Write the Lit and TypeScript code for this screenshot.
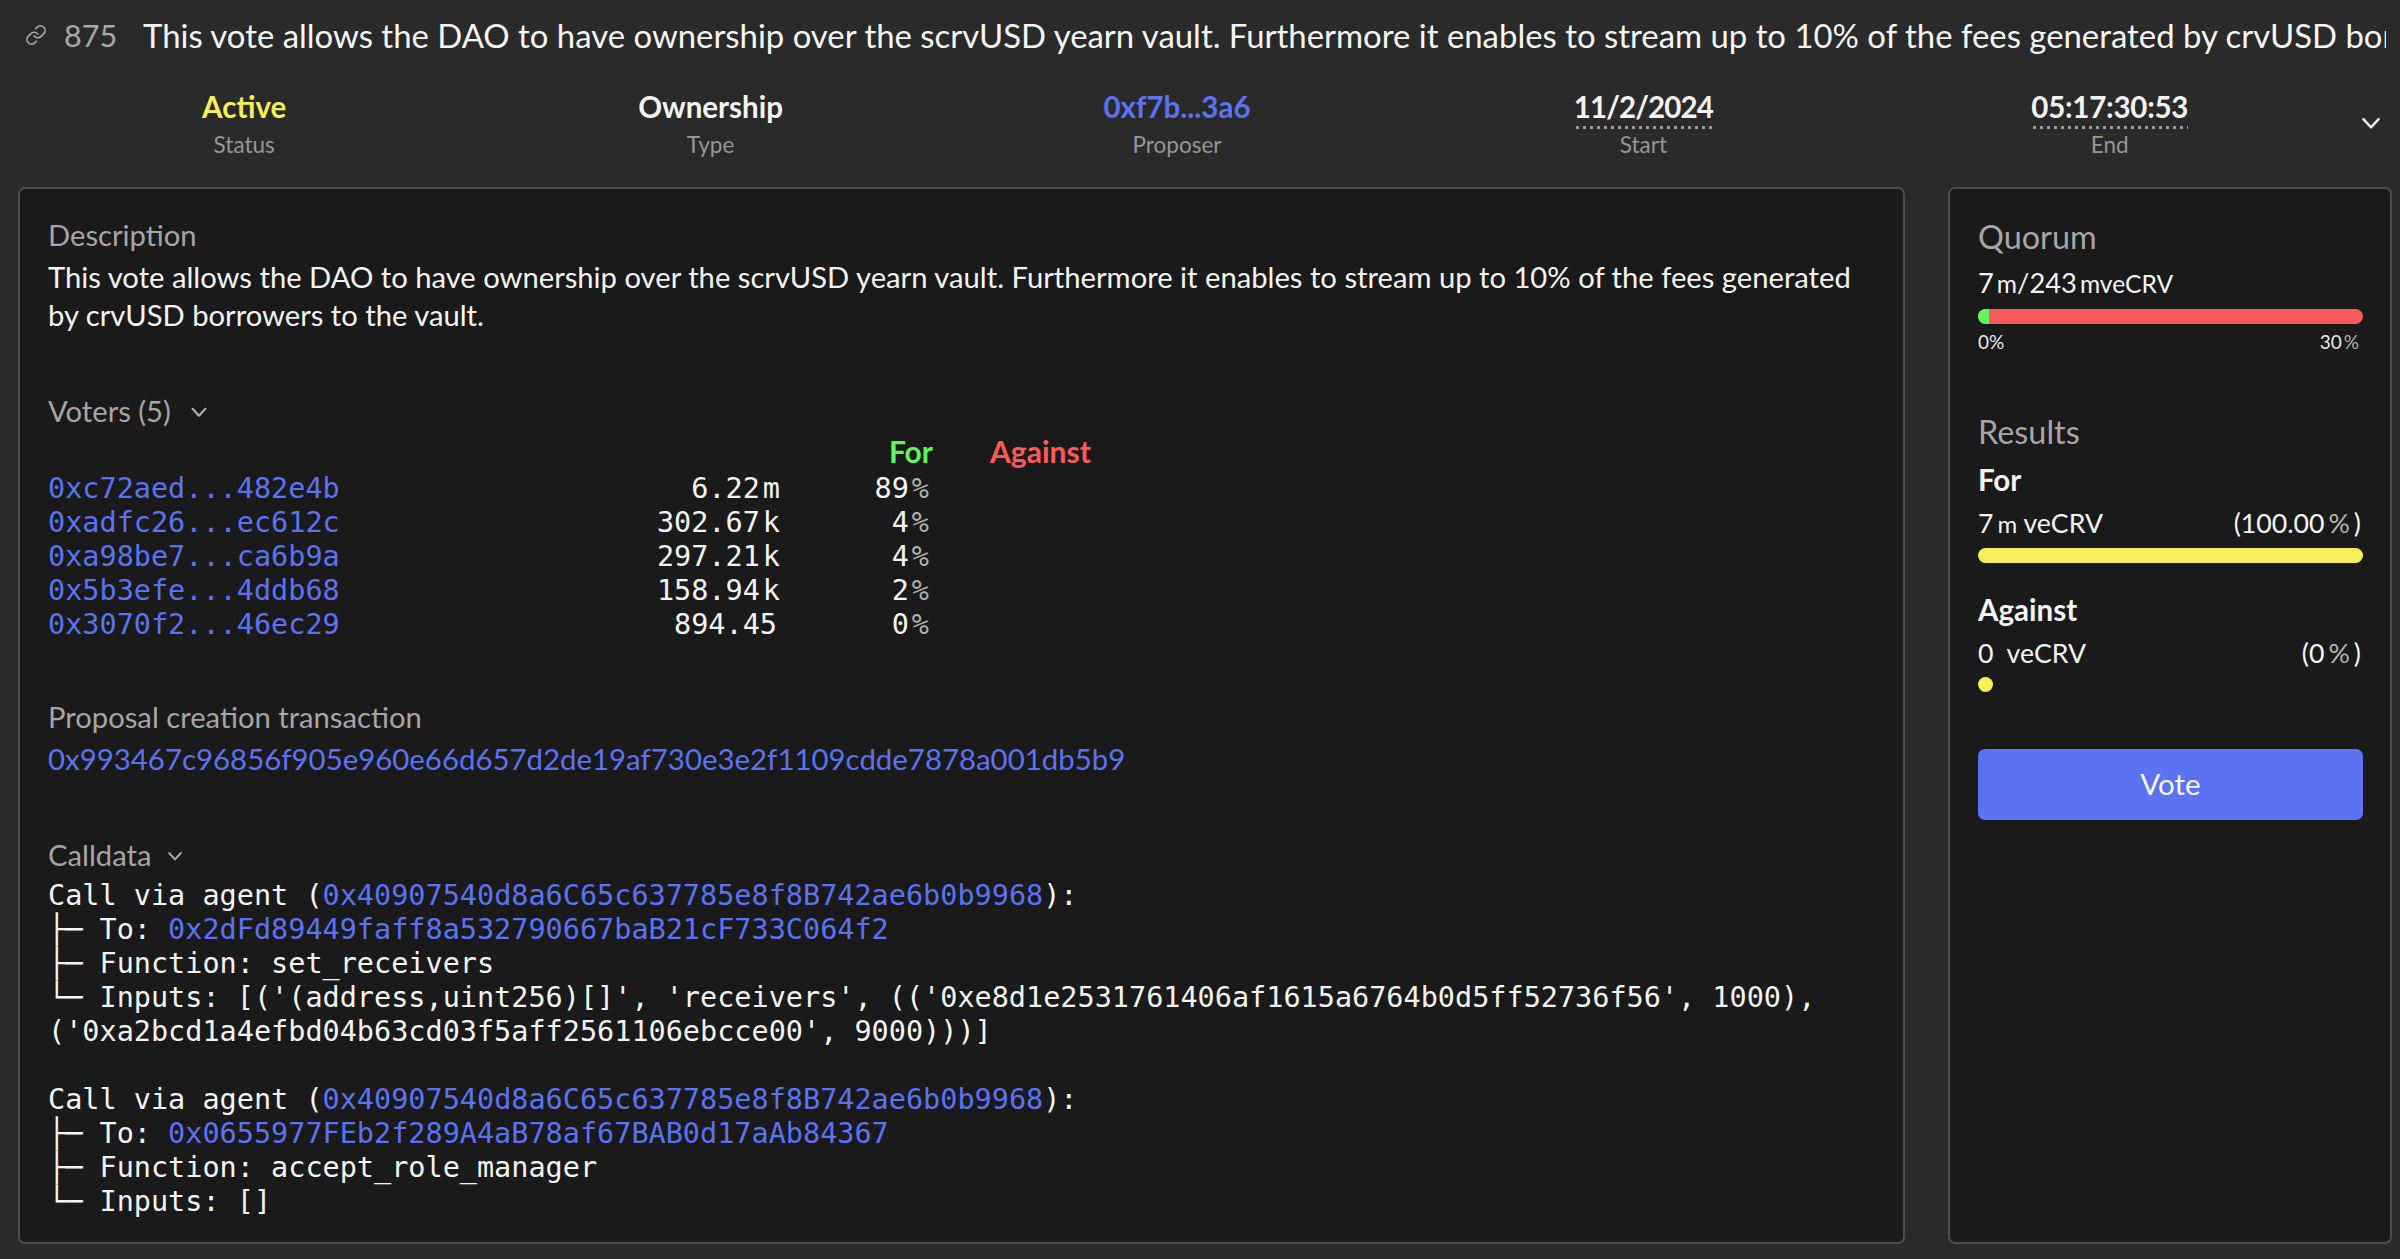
import { LitElement, html, css } from "lit";
import { customElement } from "lit/decorators.js";

const chevron = (w: number, sw = 2.4) => html`<svg class="chev" width="${w}" height="${w}" viewBox="0 0 24 24" fill="none" stroke="currentColor" stroke-width="${sw}" stroke-linecap="round" stroke-linejoin="round"><path d="M5 8.5 12 16l7-7.5"/></svg>`;

const voters = [
  ["0xc72aed...482e4b", "6.22", "m", "89"],
  ["0xadfc26...ec612c", "302.67", "k", "4"],
  ["0xa98be7...ca6b9a", "297.21", "k", "4"],
  ["0x5b3efe...4ddb68", "158.94", "k", "2"],
  ["0x3070f2...46ec29", "894.45", "", "0"],
];

@customElement("app-root")
export class AppRoot extends LitElement {
  static styles = css`
    :host { display: flex; flex-direction: column; height: 1259px; overflow: hidden; background: #2a2a2a; color: #f4f4f4; font-family: Lato, "Noto Sans", sans-serif; font-size: 29.2px; }
    .title-row { height: 72px; display: flex; align-items: center; padding: 0 14px 2px 25px; flex: none; box-sizing: border-box; }
    .link { width: 22px; height: 22px; color: #a8a8a8; flex: none; }
    .num { color: #a8a8a8; font-size: 30.5px; margin-left: 17px; flex: none; }
    .title { margin-left: 26px; font-size: 32.9px; white-space: nowrap; overflow: hidden; color: #f6f6f6; }
    .stats { display: grid; grid-template-columns: repeat(5, 466.4px); padding: 18px 0 0 11px; height: 115px; flex: none; position: relative; box-sizing: border-box; }
    .stat { display: flex; flex-direction: column; align-items: center; }
    .val { font-size: 29.5px; font-weight: 700; line-height: 34px; }
    .val.yellow { color: #f7ef5a; }
    .val.blue { color: #5b73f3; }
    .val.dot { padding-bottom: 5px; background: radial-gradient(circle, #9c9c9c 1.4px, transparent 1.7px) left bottom / 7px 3px repeat-x; }
    .val.date { letter-spacing: -0.9px; }
    .val.time { letter-spacing: -0.25px; }
    .lab { font-size: 22.5px; color: #969696; line-height: 28px; margin-top: 7px; }
    .lab.d { margin-top: 2px; }
    .stats .chev { position: absolute; right: 16px; top: 38px; color: #e8e8e8; }
    .main { flex: 1; display: flex; gap: 43px; padding: 0 8px 15px 18px; min-height: 0; }
    .panel { background: #1a1a1a; border: 2px solid #4d4d4d; border-radius: 7px; box-sizing: border-box; }
    .left { width: 1887px; padding: 27px 28px 0; flex: none; }
    .right { width: 444px; padding: 28px 28px 0; flex: none; display: flex; flex-direction: column; }
    .h { color: #a8a4a8; line-height: 38.5px; display: flex; align-items: center; }
    .h .chev { color: #b0b0b0; margin-top: 2px; }
    .voters .chev { margin-left: 17px; }
    .call .chev { margin-left: 14px; }
    .desc { line-height: 38.5px; margin-top: 3px; color: #f4f4f4; }
    .voters { margin-top: 57px; }
    .mono { font-family: "DejaVu Sans Mono", "Liberation Mono", monospace; font-size: 28.5px; line-height: 34px; }
    .vhead { display: flex; font-weight: 700; height: 34px; line-height: 34px; margin-top: 4px; margin-bottom: 4px; font-size: 30px; }
    .for { color: #5ff55f; width: 885px; text-align: right; }
    .against { color: #fa5a5a; margin-left: 57px; }
    .vrow { display: grid; grid-template-columns: 292px 440px 149px; height: 34px; }
    .amt { text-align: right; }
    .amt .sfx { margin-left: 3px; line-height: 0; }
    .amt.plain { padding-right: 3px; }
    .pct { text-align: right; }
    .pct span { color: #b0b0b0; font-size: 28.5px; margin-left: 3px; line-height: 0; }
    a { color: #5b73f3; text-decoration: none; }
    .prop { margin-top: 56px; }
    .tx { line-height: 38.5px; margin-top: 3px; font-size: 29.4px; }
    .call { margin-top: 58px; }
    pre { margin: 4px 0 0; white-space: pre-wrap; word-break: normal; color: #f4f4f4; }
    .q { font-size: 32.4px; color: #a8a4a8; line-height: 40px; }
    .q.r { margin-top: 58px; }
    .qv { line-height: 36px; margin-top: 8px; white-space: pre; font-size: 27.3px; }
    .u { font-size: 0.9em; margin-left: 3px; }
    .qbar { height: 15px; margin-top: 7px; border-radius: 8px; background: #fa5a5a; overflow: hidden; width: 385px; }
    .qbar div { width: 11px; height: 100%; background: #5ff55f; }
    .scale { display: flex; justify-content: space-between; font-size: 19px; line-height: 24px; margin-top: 6px; color: #e8e8e8; padding-right: 3px; }
    .scale span span { margin-left: 2px; color: #b0b0b0; }
    .side-b { font-weight: 700; line-height: 36px; margin-top: 10px; font-size: 29.5px; }
    .side-b.a { margin-top: 29px; }
    .row { display: flex; justify-content: space-between; line-height: 36px; margin-top: 7px; white-space: pre; font-size: 26.7px; padding-right: 1px; }
    .row .u { margin-left: 4px; }
    .row i { font-style: normal; color: #b4b4b4; margin: 0 4px; }
    .ybar { height: 15px; margin-top: 6px; border-radius: 8px; background: #f7ef5a; width: 385px; }
    .ybar.s { width: 15px; }
    button { all: unset; box-sizing: border-box; display: flex; justify-content: center; align-items: center; width: 385px; height: 71px; margin-top: 57px; padding-bottom: 2px; background: #5b73f3; border-radius: 7px; color: #f6f6f6; font-size: 29.5px; }
  `;

  render() {
    const addr = "0x40907540d8a6C65c637785e8f8B742ae6b0b9968";
    return html`
      <div class="title-row">
        <svg class="link" viewBox="0 0 24 24" fill="none" stroke="currentColor" stroke-width="1.8" stroke-linecap="round" stroke-linejoin="round"><path d="M10 13a5 5 0 0 0 7.54.54l3-3a5 5 0 0 0-7.07-7.07l-1.72 1.71"/><path d="M14 11a5 5 0 0 0-7.54-.54l-3 3a5 5 0 0 0 7.07 7.07l1.71-1.71"/></svg>
        <span class="num">875</span>
        <span class="title">This vote allows the DAO to have ownership over the scrvUSD yearn vault. Furthermore it enables to stream up to 10% of the fees generated by crvUSD borrowers to the vault.</span>
      </div>
      <div class="stats">
        <div class="stat"><div class="val yellow">Active</div><div class="lab">Status</div></div>
        <div class="stat"><div class="val">Ownership</div><div class="lab">Type</div></div>
        <div class="stat"><div class="val blue">0xf7b...3a6</div><div class="lab">Proposer</div></div>
        <div class="stat"><div class="val dot date">11/2/2024</div><div class="lab d">Start</div></div>
        <div class="stat"><div class="val dot time">05:17:30:53</div><div class="lab d">End</div></div>
        ${chevron(26)}
      </div>
      <div class="main">
        <div class="panel left">
          <div class="h">Description</div>
          <div class="desc">This vote allows the DAO to have ownership over the scrvUSD yearn vault. Furthermore it enables to stream up to 10% of the fees generated by crvUSD borrowers to the vault.</div>
          <div class="h voters">Voters (5) ${chevron(22)}</div>
          <div class="vhead"><span class="for">For</span><span class="against">Against</span></div>
          <div class="mono">
            ${voters.map(v => html`<div class="vrow"><a>${v[0]}</a><div class="amt ${v[2] ? "" : "plain"}">${v[1]}${v[2] ? html`<span class="sfx">${v[2]}</span>` : ""}</div><div class="pct">${v[3]}<span>%</span></div></div>`)}
          </div>
          <div class="h prop">Proposal creation transaction</div>
          <div class="tx"><a>0x993467c96856f905e960e66d657d2de19af730e3e2f1109cdde7878a001db5b9</a></div>
          <div class="h call">Calldata ${chevron(20)}</div>
          <pre class="mono">Call via agent (<a>${addr}</a>):
├─ To: <a>0x2dFd89449faff8a532790667baB21cF733C064f2</a>
├─ Function: set_receivers
└─ Inputs: [('(address,uint256)[]', 'receivers', (('0xe8d1e2531761406af1615a6764b0d5ff52736f56', 1000), ('0xa2bcd1a4efbd04b63cd03f5aff2561106ebcce00', 9000)))]

Call via agent (<a>${addr}</a>):
├─ To: <a>0x0655977FEb2f289A4aB78af67BAB0d17aAb84367</a>
├─ Function: accept_role_manager
└─ Inputs: []</pre>
        </div>
        <div class="panel right">
          <div class="q">Quorum</div>
          <div class="qv">7<span class="u">m</span>/243<span class="u">mveCRV</span></div>
          <div class="qbar"><div></div></div>
          <div class="scale"><span>0%</span><span>30<span>%</span></span></div>
          <div class="q r">Results</div>
          <div class="side-b">For</div>
          <div class="row"><span>7<span class="u">m</span> veCRV</span><span>(100.00<i>%</i>)</span></div>
          <div class="ybar"></div>
          <div class="side-b a">Against</div>
          <div class="row"><span>0  veCRV</span><span>(0<i>%</i>)</span></div>
          <div class="ybar s"></div>
          <button>Vote</button>
        </div>
      </div>
    `;
  }
}
